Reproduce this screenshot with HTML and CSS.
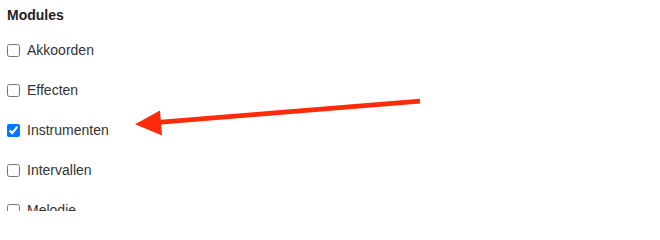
FILE: index.html
```html
<!DOCTYPE html>
<html>
<head>
<meta charset="utf-8">
<link rel="stylesheet" href="styles.css">
</head>
<body>
<div class="panel">
  <div class="title">Modules</div>
  <ul class="modules">
    <li class="row"><label><input type="checkbox"><span>Akkoorden</span></label></li>
    <li class="row"><label><input type="checkbox"><span>Effecten</span></label></li>
    <li class="row"><label><input type="checkbox" checked><span>Instrumenten</span></label></li>
    <li class="row"><label><input type="checkbox"><span>Intervallen</span></label></li>
    <li class="row"><label><input type="checkbox"><span>Melodie</span></label></li>
  </ul>
  <svg class="arrow" width="660" height="211" viewBox="0 0 660 211">
    <line x1="158" y1="122.3" x2="420" y2="101.2" stroke="#ff2a0a" stroke-width="4.8" />
    <polygon points="135,124.3 160,110.5 162,135.5" fill="#ff2a0a" />
  </svg>
</div>
</body>
</html>
```

FILE: styles.css
```css
html, body {
  margin: 0;
  padding: 0;
  background: #ffffff;
}
body {
  font-family: "Liberation Sans", Arial, sans-serif;
  color: #333333;
  overflow: hidden;
}
.panel {
  position: relative;
  width: 660px;
  height: 211px;
  padding: 5px 0 0 7px;
  box-sizing: border-box;
}
.title {
  font-size: 14px;
  font-weight: bold;
  line-height: 20px;
  height: 20px;
  color: #222222;
}
.modules {
  list-style: none;
  margin: 5px 0 0 0;
  padding: 0;
}
.row {
  height: 40px;
  display: flex;
  align-items: center;
}
.row label {
  display: flex;
  align-items: center;
  gap: 7px;
  font-size: 14px;
  line-height: 20px;
}
.row input {
  margin: 0;
  width: 13px;
  height: 13px;
}
.arrow {
  position: absolute;
  left: 0;
  top: 0;
  pointer-events: none;
}
```
